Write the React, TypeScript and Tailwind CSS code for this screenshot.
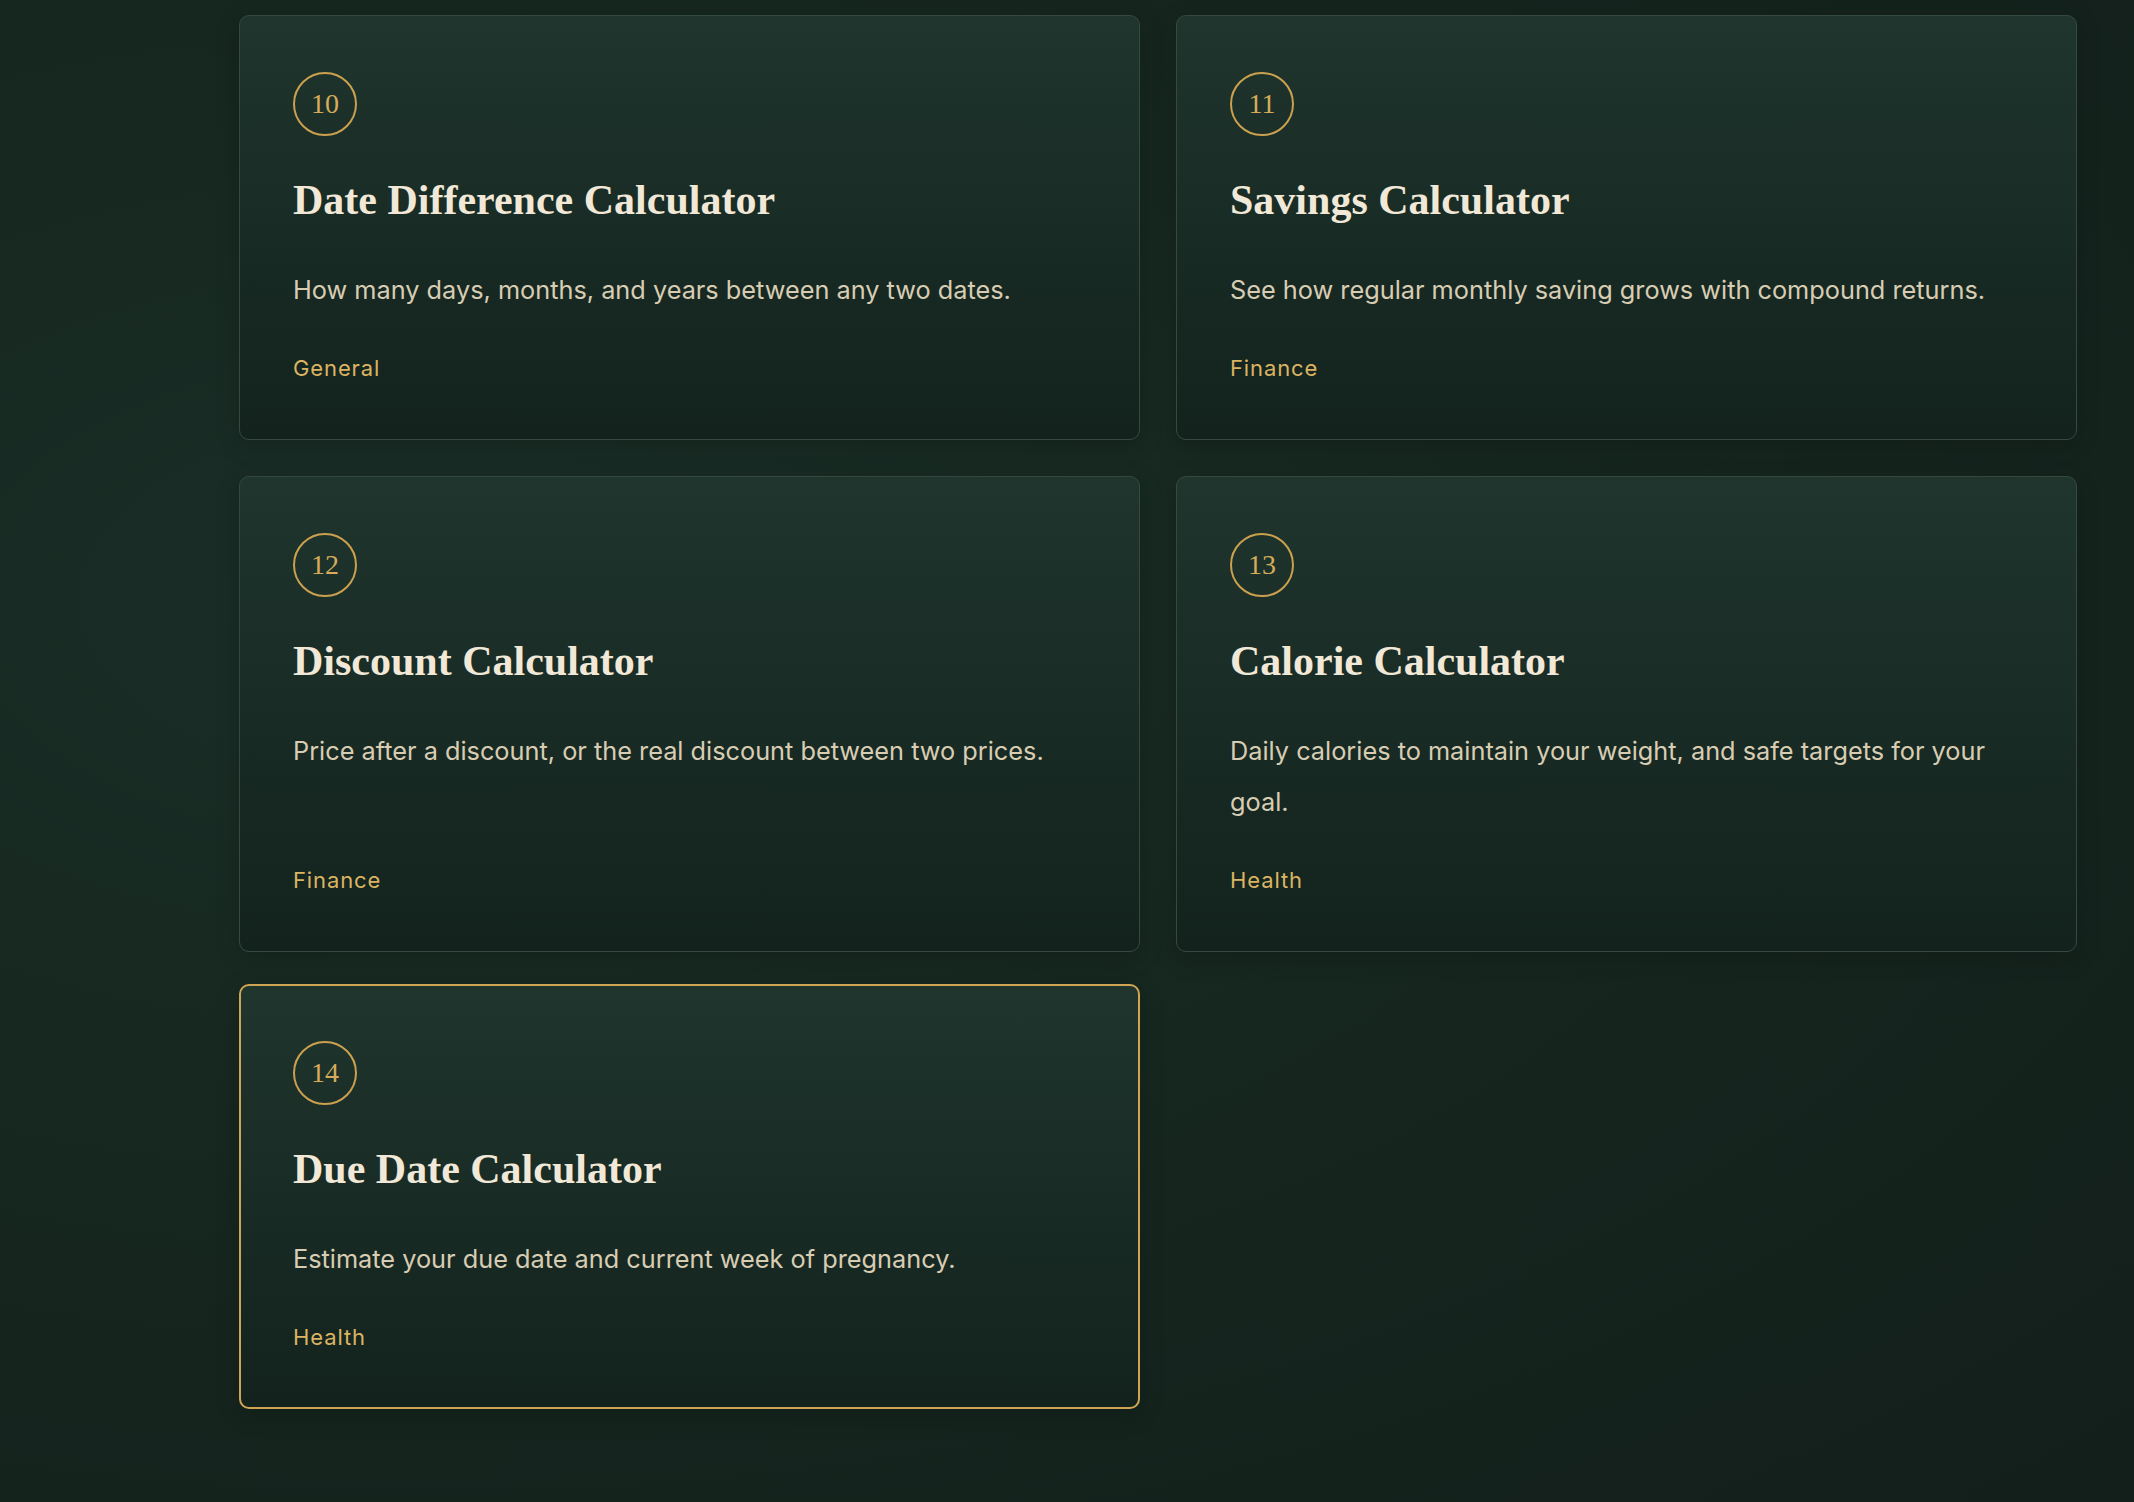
type Tool = {
  num: number;
  title: string;
  blurb: string;
  tag: string;
  active?: boolean;
};

const tools: Tool[] = [
  {
    num: 10,
    title: "Date Difference Calculator",
    blurb: "How many days, months, and years between any two dates.",
    tag: "General",
  },
  {
    num: 11,
    title: "Savings Calculator",
    blurb: "See how regular monthly saving grows with compound returns.",
    tag: "Finance",
  },
  {
    num: 12,
    title: "Discount Calculator",
    blurb: "Price after a discount, or the real discount between two prices.",
    tag: "Finance",
  },
  {
    num: 13,
    title: "Calorie Calculator",
    blurb: "Daily calories to maintain your weight, and safe targets for your goal.",
    tag: "Health",
  },
  {
    num: 14,
    title: "Due Date Calculator",
    blurb: "Estimate your due date and current week of pregnancy.",
    tag: "Health",
    active: true,
  },
];

export default function App() {
  return (
    <main className="min-h-screen bg-[radial-gradient(ellipse_at_20%_40%,#1a2e27_0%,#16271f_45%,#131f1b_100%)] pl-[239px] pr-[57px] pt-[15px] pb-[93px]">
      <div className="grid grid-cols-2 gap-9">
        {tools.map((tool) => (
          <ToolCard key={tool.num} tool={tool} />
        ))}
      </div>
    </main>
  );
}

function ToolCard({ tool }: { tool: Tool }) {
  return (
    <a
      href="#"
      className={`flex flex-col rounded-[10px] bg-linear-to-b from-[#1f352d] to-[#13221d] shadow-[0_6px_24px_rgba(0,0,0,0.18)] ${
        tool.active
          ? "-translate-y-1 border-2 border-[#cfa553] px-[52px] py-[55px]"
          : "border border-[#35493f] px-[53px] py-[56px]"
      }`}
    >
      <div className="flex h-16 w-16 items-center justify-center rounded-full border-2 border-[#cba14f] font-['Liberation_Serif',serif] text-[28px] leading-none text-[#d6ac5a]">
        {tool.num}
      </div>

      <h2 className="mt-10 font-['Liberation_Serif',serif] text-[42px] font-bold leading-[48px] text-[#f1e8d7]">
        {tool.title}
      </h2>

      <p className="mt-10 mb-[38px] font-['Inter',sans-serif] text-[25.3px] leading-[51px] text-[#d8cdb3]">
        {tool.blurb}
      </p>

      <span className="mt-auto font-['Inter',sans-serif] text-[22px] leading-[30px] tracking-[0.04em] text-[#dbb462]">
        {tool.tag}
      </span>
    </a>
  );
}
